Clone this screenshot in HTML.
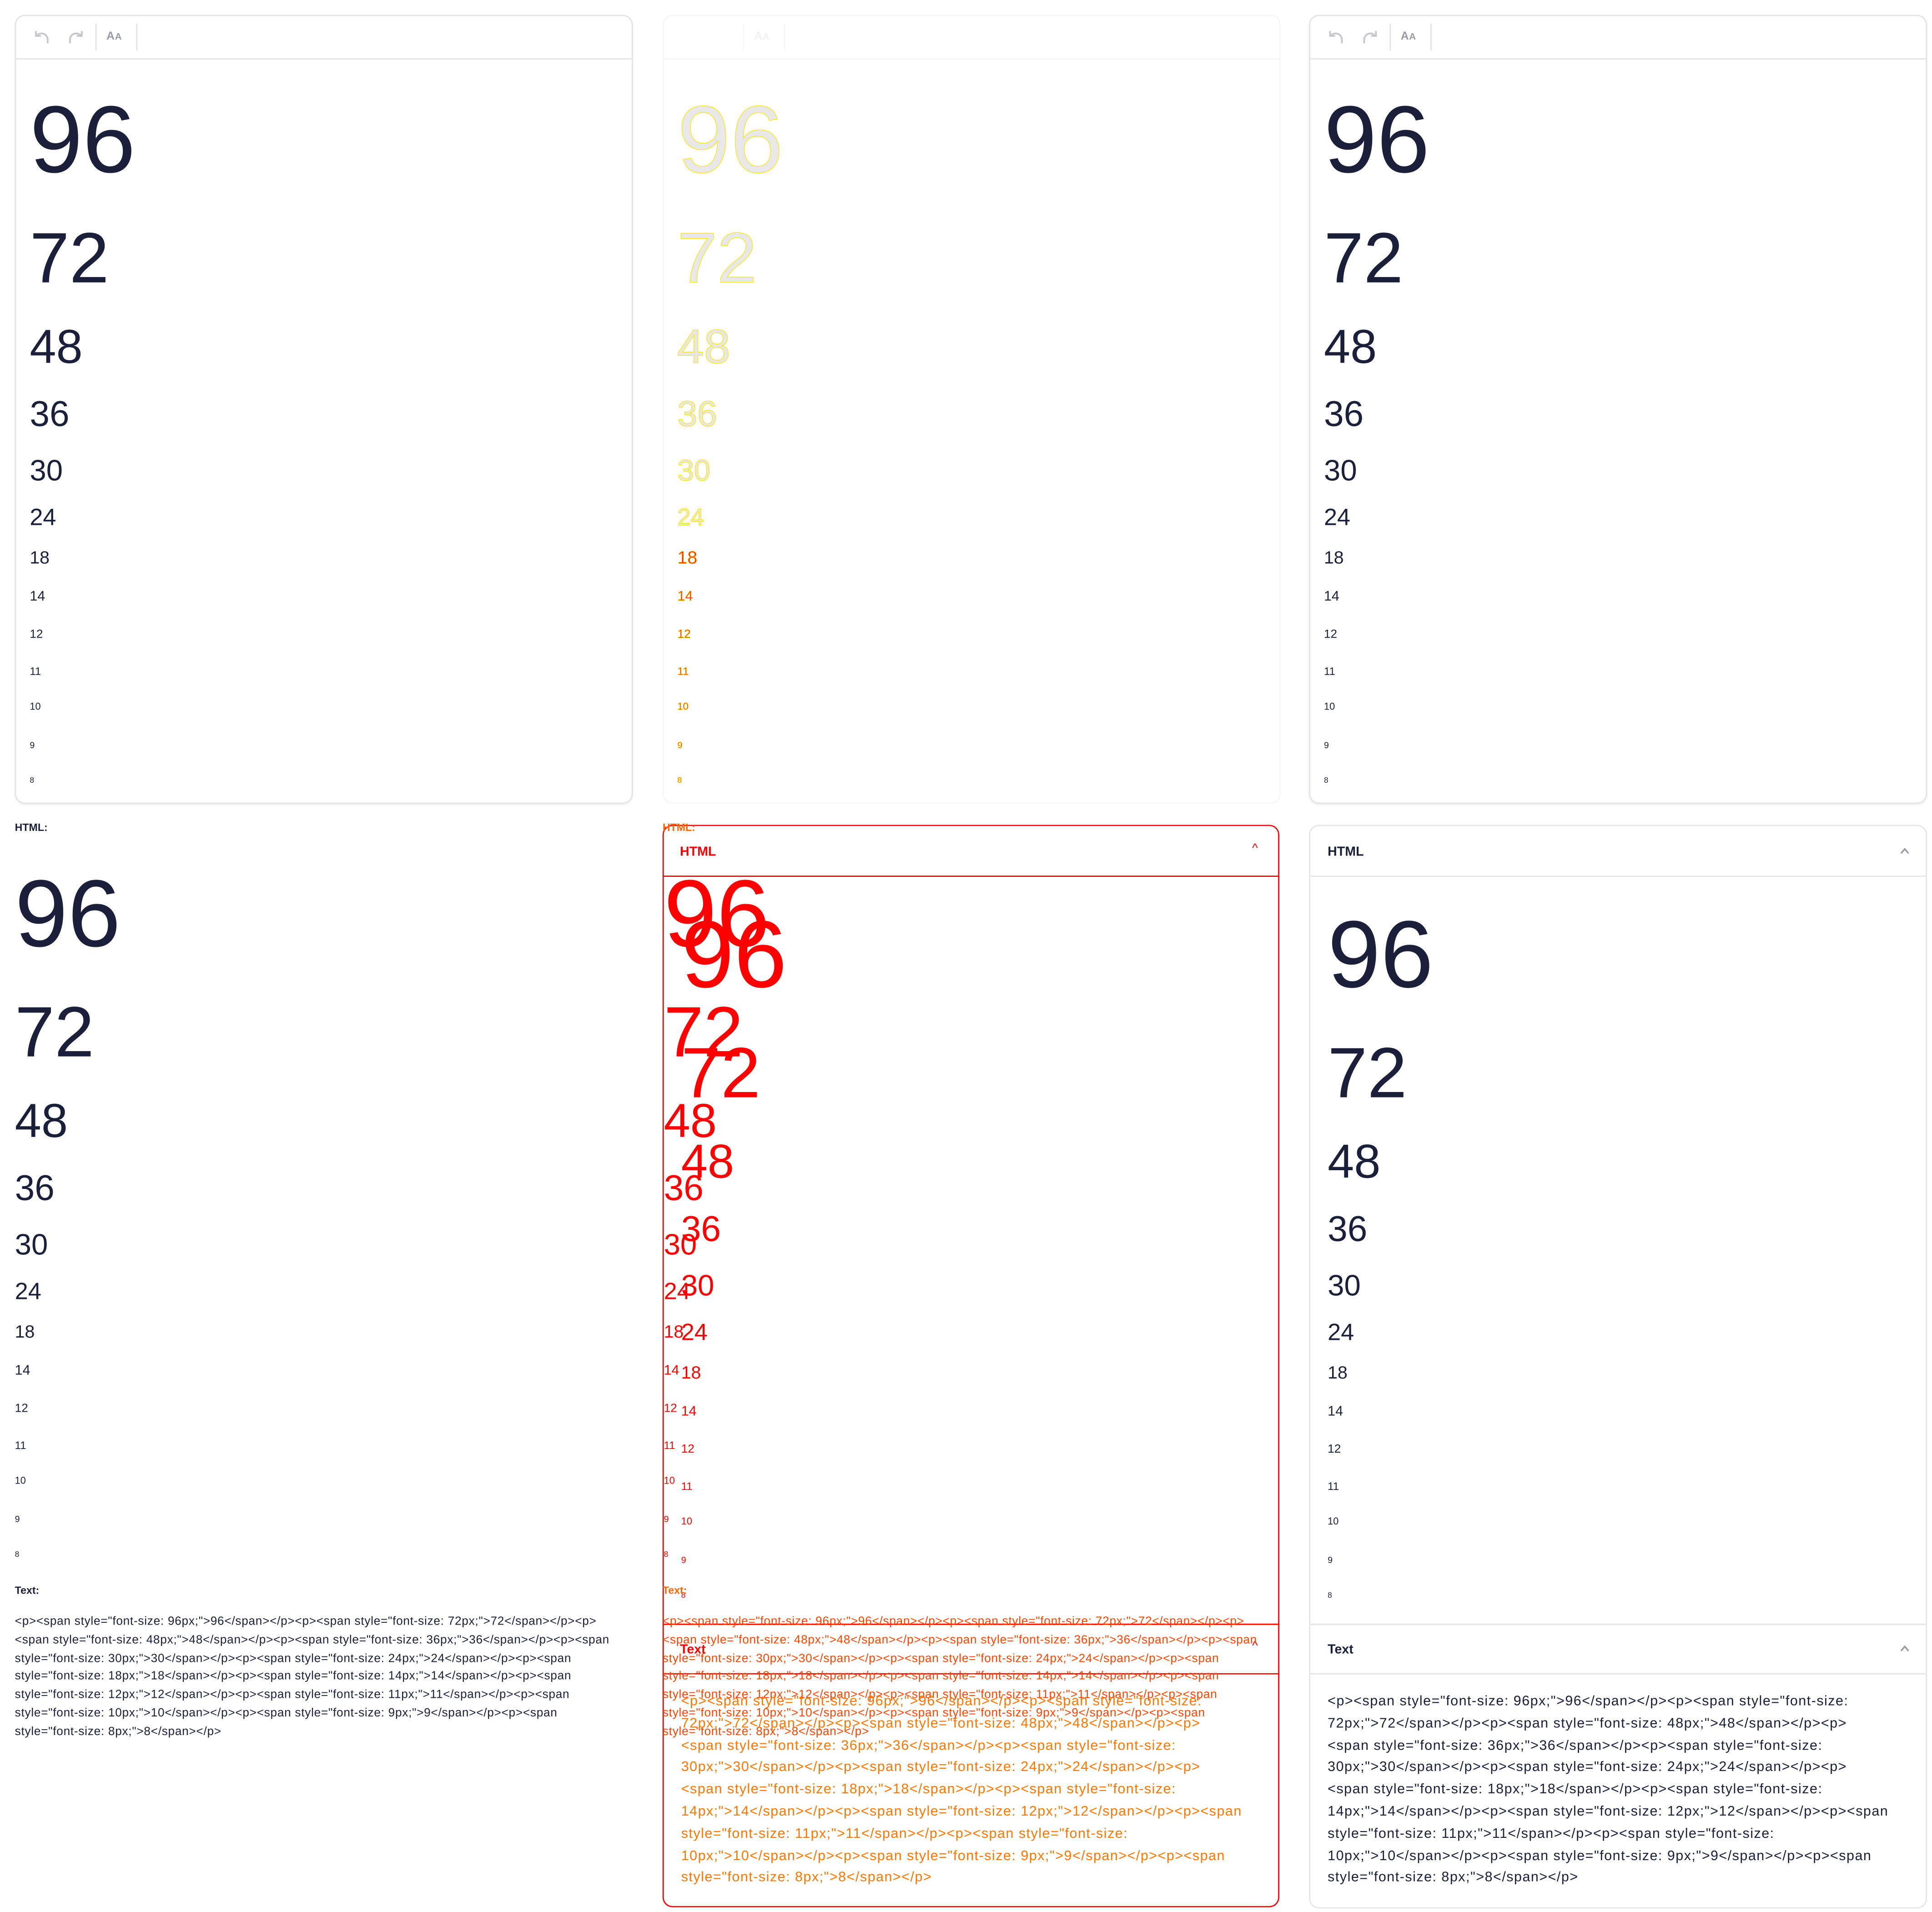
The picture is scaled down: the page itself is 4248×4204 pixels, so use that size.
<!DOCTYPE html>
<html><head><meta charset="utf-8"><style>
html,body{margin:0;padding:0;background:#fff;width:4248px;height:4204px;overflow:hidden}
#r{transform:scale(2.7231);transform-origin:0 0;width:1560px;height:1544px;position:relative;font-family:"Liberation Sans",sans-serif;color:#1c1f3a}
.a{position:absolute}
.d{position:absolute;left:0;line-height:1;white-space:nowrap}
.card{position:absolute;top:12px;width:497px;height:635px;border:1px solid #e3e3e6;border-radius:8px;box-shadow:0 1px 2px rgba(0,0,0,.06);background:#fff}
.tb{position:absolute;left:0;right:0;top:0;height:34px;border-bottom:1px solid #e3e3e6}
.vl{position:absolute;top:6px;width:1px;height:22px;background:#e3e3e6}
.aa{position:absolute;top:11px;font-size:9px;font-weight:bold;color:#9a9ca5;letter-spacing:.3px}
.code{position:absolute;white-space:nowrap}
.c1{font-size:9.6px;line-height:14.8px;letter-spacing:.28px}
.c3{font-size:11.2px;line-height:17.8px;letter-spacing:.55px}
.g{position:absolute;width:0;height:0}
.m .d{color:#e8e8e8;-webkit-text-stroke:.5px #ffe600}
.m .d.s{color:#ff2a00;-webkit-text-stroke:.3px #ffd000}
.rd .d{color:#ff0000}
</style></head><body><div id="r">

<!-- column 1 card -->
<div class="card" style="left:12px">
 <div class="tb">
  <svg class="a" style="left:13px;top:10px" width="16" height="14" viewBox="0 0 16 14"><path d="M3 2v4h4M3.5 6A5 5 0 0 1 12.5 9v3" fill="none" stroke="#c5c7cc" stroke-width="1.4"/></svg>
  <svg class="a" style="left:40px;top:10px" width="16" height="14" viewBox="0 0 16 14"><path d="M13 2v4H9M12.5 6A5 5 0 0 0 3.5 9v3" fill="none" stroke="#c5c7cc" stroke-width="1.4"/></svg>
  <div class="vl" style="left:64px"></div>
  <div class="aa" style="left:73px">A<span style="font-size:7.5px">A</span></div>
  <div class="vl" style="left:97px"></div>
 </div>
</div>
<div class="g" style="left:24px;top:0">
 <div class="d" style="top:75px;font-size:76.8px">96</div>
 <div class="d" style="top:181.2px;font-size:57.6px">72</div>
 <div class="d" style="top:261.5px;font-size:38.4px">48</div>
 <div class="d" style="top:320.6px;font-size:28.8px">36</div>
 <div class="d" style="top:368.7px;font-size:24px">30</div>
 <div class="d" style="top:408.7px;font-size:19.2px">24</div>
 <div class="d" style="top:443.8px;font-size:14.4px">18</div>
 <div class="d" style="top:476.5px;font-size:11.2px">14</div>
 <div class="d" style="top:507.9px;font-size:9.6px">12</div>
 <div class="d" style="top:537.6px;font-size:8.8px">11</div>
 <div class="d" style="top:567.2px;font-size:8px">10</div>
 <div class="d" style="top:597.9px;font-size:7.2px">9</div>
 <div class="d" style="top:627.6px;font-size:6.4px">8</div>
</div>
<div class="a" style="left:12px;top:663px;font-size:8.5px;font-weight:bold">HTML:</div>
<div class="g" style="left:12px;top:625px">
 <div class="d" style="top:75px;font-size:76.8px">96</div>
 <div class="d" style="top:181.2px;font-size:57.6px">72</div>
 <div class="d" style="top:261.5px;font-size:38.4px">48</div>
 <div class="d" style="top:320.6px;font-size:28.8px">36</div>
 <div class="d" style="top:368.7px;font-size:24px">30</div>
 <div class="d" style="top:408.7px;font-size:19.2px">24</div>
 <div class="d" style="top:443.8px;font-size:14.4px">18</div>
 <div class="d" style="top:476.5px;font-size:11.2px">14</div>
 <div class="d" style="top:507.9px;font-size:9.6px">12</div>
 <div class="d" style="top:537.6px;font-size:8.8px">11</div>
 <div class="d" style="top:567.2px;font-size:8px">10</div>
 <div class="d" style="top:597.9px;font-size:7.2px">9</div>
 <div class="d" style="top:627.6px;font-size:6.4px">8</div>
</div>
<div class="a" style="left:12px;top:1279px;font-size:8.5px;font-weight:bold">Text:</div>
<div class="code c1" style="left:12px;top:1303px">&lt;p&gt;&lt;span style="font-size: 96px;"&gt;96&lt;/span&gt;&lt;/p&gt;&lt;p&gt;&lt;span style="font-size: 72px;"&gt;72&lt;/span&gt;&lt;/p&gt;&lt;p&gt;<br>&lt;span style="font-size: 48px;"&gt;48&lt;/span&gt;&lt;/p&gt;&lt;p&gt;&lt;span style="font-size: 36px;"&gt;36&lt;/span&gt;&lt;/p&gt;&lt;p&gt;&lt;span<br>style="font-size: 30px;"&gt;30&lt;/span&gt;&lt;/p&gt;&lt;p&gt;&lt;span style="font-size: 24px;"&gt;24&lt;/span&gt;&lt;/p&gt;&lt;p&gt;&lt;span<br>style="font-size: 18px;"&gt;18&lt;/span&gt;&lt;/p&gt;&lt;p&gt;&lt;span style="font-size: 14px;"&gt;14&lt;/span&gt;&lt;/p&gt;&lt;p&gt;&lt;span<br>style="font-size: 12px;"&gt;12&lt;/span&gt;&lt;/p&gt;&lt;p&gt;&lt;span style="font-size: 11px;"&gt;11&lt;/span&gt;&lt;/p&gt;&lt;p&gt;&lt;span<br>style="font-size: 10px;"&gt;10&lt;/span&gt;&lt;/p&gt;&lt;p&gt;&lt;span style="font-size: 9px;"&gt;9&lt;/span&gt;&lt;/p&gt;&lt;p&gt;&lt;span<br>style="font-size: 8px;"&gt;8&lt;/span&gt;&lt;/p&gt;</div>

<!-- column 2 (diff) -->
<div class="card" style="left:535px;border-color:#f6f6f6;box-shadow:none">
 <div class="tb" style="border-color:#f6f6f6">
  <div class="vl" style="left:64px;background:#f6f6f6"></div>
  <div class="aa" style="left:73px;color:#f2f2f2">A<span style="font-size:7.5px">A</span></div>
  <div class="vl" style="left:97px;background:#f6f6f6"></div>
 </div>
</div>
<div class="g m" style="left:547px;top:0">
 <div class="d" style="top:75px;font-size:76.8px">96</div>
 <div class="d" style="top:181.2px;font-size:57.6px">72</div>
 <div class="d" style="top:261.5px;font-size:38.4px">48</div>
 <div class="d" style="top:320.6px;font-size:28.8px">36</div>
 <div class="d" style="top:368.7px;font-size:24px">30</div>
 <div class="d" style="top:408.7px;font-size:19.2px">24</div>
 <div class="d s" style="top:443.8px;font-size:14.4px">18</div>
 <div class="d s" style="top:476.5px;font-size:11.2px">14</div>
 <div class="d s" style="top:507.9px;font-size:9.6px">12</div>
 <div class="d s" style="top:537.6px;font-size:8.8px">11</div>
 <div class="d s" style="top:567.2px;font-size:8px">10</div>
 <div class="d s" style="top:597.9px;font-size:7.2px">9</div>
 <div class="d s" style="top:627.6px;font-size:6.4px">8</div>
</div>
<div class="a" style="left:535px;top:666px;width:496px;height:872px;border:1px solid #f00;border-radius:8px"></div>
<div class="a" style="left:535px;top:707px;width:498px;height:1px;background:#f00"></div>
<div class="a" style="left:535px;top:1311px;width:498px;height:1px;background:#f00"></div>
<div class="a" style="left:535px;top:1351px;width:498px;height:1px;background:#f00"></div>
<div class="a" style="left:535px;top:663px;font-size:8.5px;font-weight:bold;color:#f60">HTML:</div>
<div class="a" style="left:549px;top:682px;font-size:10.5px;font-weight:bold;color:#f00">HTML</div>
<div class="a" style="left:1011px;top:680px;font-size:10px;color:#f00">^</div>
<div class="a" style="left:549px;top:1326px;font-size:10.5px;font-weight:bold;color:#f00">Text</div>
<div class="a" style="left:1011px;top:1324px;font-size:10px;color:#f00">^</div>
<div class="g rd" style="left:536px;top:625px">
 <div class="d" style="top:75px;font-size:76.8px">96</div>
 <div class="d" style="top:181.2px;font-size:57.6px">72</div>
 <div class="d" style="top:261.5px;font-size:38.4px">48</div>
 <div class="d" style="top:320.6px;font-size:28.8px">36</div>
 <div class="d" style="top:368.7px;font-size:24px">30</div>
 <div class="d" style="top:408.7px;font-size:19.2px">24</div>
 <div class="d" style="top:443.8px;font-size:14.4px">18</div>
 <div class="d" style="top:476.5px;font-size:11.2px">14</div>
 <div class="d" style="top:507.9px;font-size:9.6px">12</div>
 <div class="d" style="top:537.6px;font-size:8.8px">11</div>
 <div class="d" style="top:567.2px;font-size:8px">10</div>
 <div class="d" style="top:597.9px;font-size:7.2px">9</div>
 <div class="d" style="top:627.6px;font-size:6.4px">8</div>
</div>
<div class="g rd" style="left:550px;top:658px">
 <div class="d" style="top:75px;font-size:76.8px">96</div>
 <div class="d" style="top:181.2px;font-size:57.6px">72</div>
 <div class="d" style="top:261.5px;font-size:38.4px">48</div>
 <div class="d" style="top:320.6px;font-size:28.8px">36</div>
 <div class="d" style="top:368.7px;font-size:24px">30</div>
 <div class="d" style="top:408.7px;font-size:19.2px">24</div>
 <div class="d" style="top:443.8px;font-size:14.4px">18</div>
 <div class="d" style="top:476.5px;font-size:11.2px">14</div>
 <div class="d" style="top:507.9px;font-size:9.6px">12</div>
 <div class="d" style="top:537.6px;font-size:8.8px">11</div>
 <div class="d" style="top:567.2px;font-size:8px">10</div>
 <div class="d" style="top:597.9px;font-size:7.2px">9</div>
 <div class="d" style="top:627.6px;font-size:6.4px">8</div>
</div>
<div class="a" style="left:535px;top:1279px;font-size:8.5px;font-weight:bold;color:#f60">Text:</div>
<div class="code c1" style="left:535px;top:1303px;color:#f40">&lt;p&gt;&lt;span style="font-size: 96px;"&gt;96&lt;/span&gt;&lt;/p&gt;&lt;p&gt;&lt;span style="font-size: 72px;"&gt;72&lt;/span&gt;&lt;/p&gt;&lt;p&gt;<br>&lt;span style="font-size: 48px;"&gt;48&lt;/span&gt;&lt;/p&gt;&lt;p&gt;&lt;span style="font-size: 36px;"&gt;36&lt;/span&gt;&lt;/p&gt;&lt;p&gt;&lt;span<br>style="font-size: 30px;"&gt;30&lt;/span&gt;&lt;/p&gt;&lt;p&gt;&lt;span style="font-size: 24px;"&gt;24&lt;/span&gt;&lt;/p&gt;&lt;p&gt;&lt;span<br>style="font-size: 18px;"&gt;18&lt;/span&gt;&lt;/p&gt;&lt;p&gt;&lt;span style="font-size: 14px;"&gt;14&lt;/span&gt;&lt;/p&gt;&lt;p&gt;&lt;span<br>style="font-size: 12px;"&gt;12&lt;/span&gt;&lt;/p&gt;&lt;p&gt;&lt;span style="font-size: 11px;"&gt;11&lt;/span&gt;&lt;/p&gt;&lt;p&gt;&lt;span<br>style="font-size: 10px;"&gt;10&lt;/span&gt;&lt;/p&gt;&lt;p&gt;&lt;span style="font-size: 9px;"&gt;9&lt;/span&gt;&lt;/p&gt;&lt;p&gt;&lt;span<br>style="font-size: 8px;"&gt;8&lt;/span&gt;&lt;/p&gt;</div>
<div class="code c3" style="left:550px;top:1366px;color:#f70">&lt;p&gt;&lt;span style="font-size: 96px;"&gt;96&lt;/span&gt;&lt;/p&gt;&lt;p&gt;&lt;span style="font-size:<br>72px;"&gt;72&lt;/span&gt;&lt;/p&gt;&lt;p&gt;&lt;span style="font-size: 48px;"&gt;48&lt;/span&gt;&lt;/p&gt;&lt;p&gt;<br>&lt;span style="font-size: 36px;"&gt;36&lt;/span&gt;&lt;/p&gt;&lt;p&gt;&lt;span style="font-size:<br>30px;"&gt;30&lt;/span&gt;&lt;/p&gt;&lt;p&gt;&lt;span style="font-size: 24px;"&gt;24&lt;/span&gt;&lt;/p&gt;&lt;p&gt;<br>&lt;span style="font-size: 18px;"&gt;18&lt;/span&gt;&lt;/p&gt;&lt;p&gt;&lt;span style="font-size:<br>14px;"&gt;14&lt;/span&gt;&lt;/p&gt;&lt;p&gt;&lt;span style="font-size: 12px;"&gt;12&lt;/span&gt;&lt;/p&gt;&lt;p&gt;&lt;span<br>style="font-size: 11px;"&gt;11&lt;/span&gt;&lt;/p&gt;&lt;p&gt;&lt;span style="font-size:<br>10px;"&gt;10&lt;/span&gt;&lt;/p&gt;&lt;p&gt;&lt;span style="font-size: 9px;"&gt;9&lt;/span&gt;&lt;/p&gt;&lt;p&gt;&lt;span<br>style="font-size: 8px;"&gt;8&lt;/span&gt;&lt;/p&gt;</div>

<!-- column 3 -->
<div class="card" style="left:1057px">
 <div class="tb">
  <svg class="a" style="left:13px;top:10px" width="16" height="14" viewBox="0 0 16 14"><path d="M3 2v4h4M3.5 6A5 5 0 0 1 12.5 9v3" fill="none" stroke="#c5c7cc" stroke-width="1.4"/></svg>
  <svg class="a" style="left:40px;top:10px" width="16" height="14" viewBox="0 0 16 14"><path d="M13 2v4H9M12.5 6A5 5 0 0 0 3.5 9v3" fill="none" stroke="#c5c7cc" stroke-width="1.4"/></svg>
  <div class="vl" style="left:64px"></div>
  <div class="aa" style="left:73px">A<span style="font-size:7.5px">A</span></div>
  <div class="vl" style="left:97px"></div>
 </div>
</div>
<div class="g" style="left:1069px;top:0">
 <div class="d" style="top:75px;font-size:76.8px">96</div>
 <div class="d" style="top:181.2px;font-size:57.6px">72</div>
 <div class="d" style="top:261.5px;font-size:38.4px">48</div>
 <div class="d" style="top:320.6px;font-size:28.8px">36</div>
 <div class="d" style="top:368.7px;font-size:24px">30</div>
 <div class="d" style="top:408.7px;font-size:19.2px">24</div>
 <div class="d" style="top:443.8px;font-size:14.4px">18</div>
 <div class="d" style="top:476.5px;font-size:11.2px">14</div>
 <div class="d" style="top:507.9px;font-size:9.6px">12</div>
 <div class="d" style="top:537.6px;font-size:8.8px">11</div>
 <div class="d" style="top:567.2px;font-size:8px">10</div>
 <div class="d" style="top:597.9px;font-size:7.2px">9</div>
 <div class="d" style="top:627.6px;font-size:6.4px">8</div>
</div>
<div class="a" style="left:1057px;top:666px;width:497px;height:873px;border:1px solid #e5e5e8;border-radius:8px"></div>
<div class="a" style="left:1058px;top:707px;width:497px;height:1px;background:#e5e5e8"></div>
<div class="a" style="left:1058px;top:1311px;width:497px;height:1px;background:#e5e5e8"></div>
<div class="a" style="left:1058px;top:1351px;width:497px;height:1px;background:#e5e5e8"></div>
<div class="a" style="left:1072px;top:682px;font-size:10.5px;font-weight:bold">HTML</div>
<svg class="a" style="left:1533px;top:683px" width="10" height="8" viewBox="0 0 10 8"><path d="M2 6L5 2.5 8 6" fill="none" stroke="#9a9ca5" stroke-width="1.3"/></svg>
<div class="a" style="left:1072px;top:1326px;font-size:10.5px;font-weight:bold">Text</div>
<svg class="a" style="left:1533px;top:1327px" width="10" height="8" viewBox="0 0 10 8"><path d="M2 6L5 2.5 8 6" fill="none" stroke="#9a9ca5" stroke-width="1.3"/></svg>
<div class="g" style="left:1072px;top:658px">
 <div class="d" style="top:75px;font-size:76.8px">96</div>
 <div class="d" style="top:181.2px;font-size:57.6px">72</div>
 <div class="d" style="top:261.5px;font-size:38.4px">48</div>
 <div class="d" style="top:320.6px;font-size:28.8px">36</div>
 <div class="d" style="top:368.7px;font-size:24px">30</div>
 <div class="d" style="top:408.7px;font-size:19.2px">24</div>
 <div class="d" style="top:443.8px;font-size:14.4px">18</div>
 <div class="d" style="top:476.5px;font-size:11.2px">14</div>
 <div class="d" style="top:507.9px;font-size:9.6px">12</div>
 <div class="d" style="top:537.6px;font-size:8.8px">11</div>
 <div class="d" style="top:567.2px;font-size:8px">10</div>
 <div class="d" style="top:597.9px;font-size:7.2px">9</div>
 <div class="d" style="top:627.6px;font-size:6.4px">8</div>
</div>
<div class="code c3" style="left:1072px;top:1366px">&lt;p&gt;&lt;span style="font-size: 96px;"&gt;96&lt;/span&gt;&lt;/p&gt;&lt;p&gt;&lt;span style="font-size:<br>72px;"&gt;72&lt;/span&gt;&lt;/p&gt;&lt;p&gt;&lt;span style="font-size: 48px;"&gt;48&lt;/span&gt;&lt;/p&gt;&lt;p&gt;<br>&lt;span style="font-size: 36px;"&gt;36&lt;/span&gt;&lt;/p&gt;&lt;p&gt;&lt;span style="font-size:<br>30px;"&gt;30&lt;/span&gt;&lt;/p&gt;&lt;p&gt;&lt;span style="font-size: 24px;"&gt;24&lt;/span&gt;&lt;/p&gt;&lt;p&gt;<br>&lt;span style="font-size: 18px;"&gt;18&lt;/span&gt;&lt;/p&gt;&lt;p&gt;&lt;span style="font-size:<br>14px;"&gt;14&lt;/span&gt;&lt;/p&gt;&lt;p&gt;&lt;span style="font-size: 12px;"&gt;12&lt;/span&gt;&lt;/p&gt;&lt;p&gt;&lt;span<br>style="font-size: 11px;"&gt;11&lt;/span&gt;&lt;/p&gt;&lt;p&gt;&lt;span style="font-size:<br>10px;"&gt;10&lt;/span&gt;&lt;/p&gt;&lt;p&gt;&lt;span style="font-size: 9px;"&gt;9&lt;/span&gt;&lt;/p&gt;&lt;p&gt;&lt;span<br>style="font-size: 8px;"&gt;8&lt;/span&gt;&lt;/p&gt;</div>

</div></body></html>
